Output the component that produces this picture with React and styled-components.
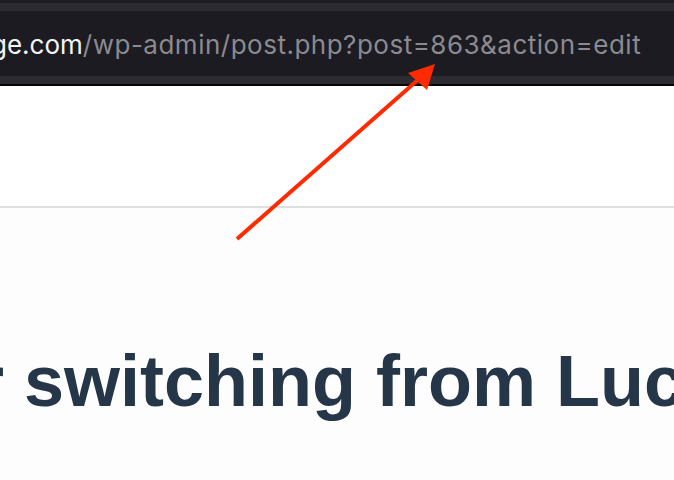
import React from "react";
import styled, { createGlobalStyle } from "styled-components";

const Global = createGlobalStyle`
  html, body { margin: 0; padding: 0; background: #fefefe; }
  body { width: 674px; height: 480px; overflow: hidden; }
  #root { width: 674px; height: 480px; overflow: hidden; position: relative; }
`;

const Frame = styled.div`
  width: 674px;
  height: 480px;
  display: flex;
  flex-direction: column;
  overflow: hidden;
  position: relative;
  background: #fefefe;
`;

const Toolbar = styled.div`
  display: flex;
  flex-direction: column;
  background: #1e1d24;
  flex: none;
`;

const Strip = styled.div`
  height: ${(p) => p.$h}px;
  background: ${(p) => p.$bg};
  flex: none;
`;

const UrlField = styled.div`
  height: 65px;
  background: #1c1b22;
  display: flex;
  align-items: center;
  overflow: hidden;
  white-space: nowrap;
  font-family: Inter, "Noto Sans", sans-serif;
  font-size: 26px;
`;

const UrlText = styled.span`
  margin-left: -9px;
  padding-top: 2px;
`;

const Host = styled.span`
  color: #f4f4f6;
  letter-spacing: 0;
`;

const Path = styled.span`
  color: #8b8a90;
  letter-spacing: 0.5px;
`;

const PageHeader = styled.div`
  height: 120px;
  background: #ffffff;
  flex: none;
`;

const Divider = styled.div`
  height: 2px;
  background: #dedede;
  flex: none;
`;

const Content = styled.div`
  flex: 1;
  background: #fdfdfd;
  padding-top: 137px;
  overflow: hidden;
`;

const Heading = styled.h1`
  margin: 0 0 0 -24px;
  font-family: "Liberation Sans", Arial, sans-serif;
  font-weight: 700;
  font-size: 72px;
  line-height: 1;
  color: #243647;
  white-space: nowrap;
`;

const Annotation = styled.svg`
  position: absolute;
  left: 0;
  top: 0;
  pointer-events: none;
`;

export default function App() {
  return (
    <>
      <Global />
      <Frame>
        <Toolbar>
          <Strip $h={3} $bg="#1e1d24" />
          <Strip $h={8} $bg="#2c2b32" />
          <UrlField>
            <UrlText>
              <Host>ge.com</Host>
              <Path>/wp-admin/post.php?post=863&amp;action=edit</Path>
            </UrlText>
          </UrlField>
          <Strip $h={8} $bg="#2c2b32" />
          <Strip $h={2} $bg="#050505" />
        </Toolbar>
        <PageHeader />
        <Divider />
        <Content>
          <Heading>r switching from Lucidchart</Heading>
        </Content>
        <Annotation width="674" height="480" viewBox="0 0 674 480">
          <line x1="237" y1="239" x2="420" y2="78" stroke="#ff2a00" strokeWidth="4" strokeLinecap="butt" />
          <polygon points="435,64 408,73 427,90" fill="#ff2a00" />
        </Annotation>
      </Frame>
    </>
  );
}
